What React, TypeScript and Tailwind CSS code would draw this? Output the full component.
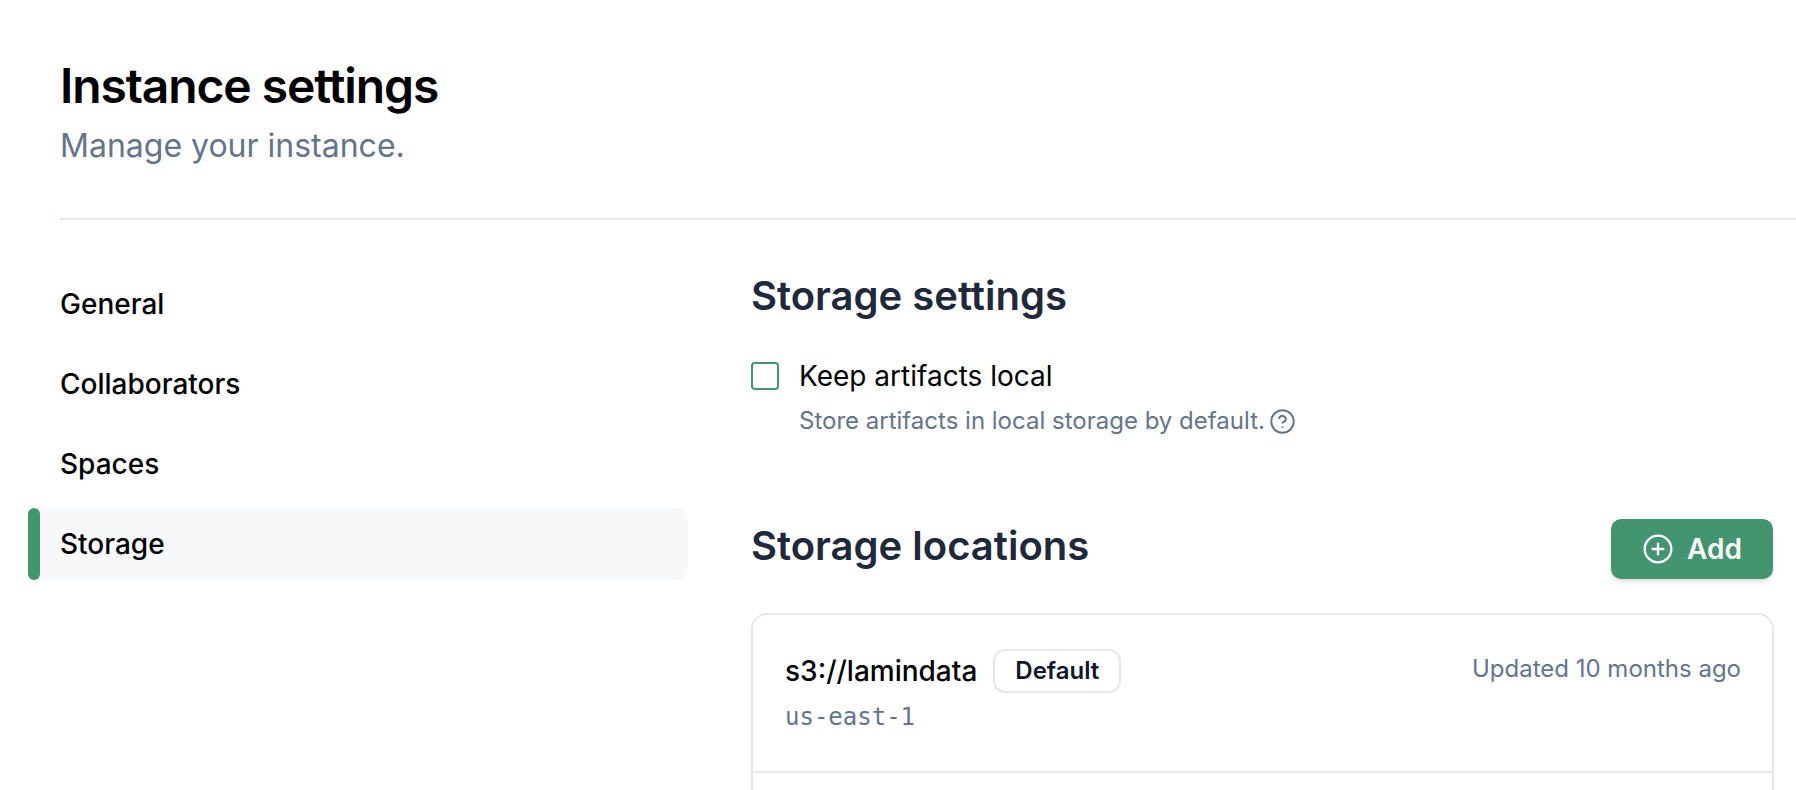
import { CircleHelp, CirclePlus } from 'lucide-react';

const navItems = ['General', 'Collaborators', 'Spaces', 'Storage'];

function SideNav({ active }: { active: string }) {
  return (
    <nav className="flex w-[660px] shrink-0 flex-col gap-2">
      {navItems.map(item => (
        <a
          key={item}
          className={`flex h-[72px] items-stretch rounded-xl text-[28px] font-medium text-black ${
            item === active ? 'bg-[#f7f8fa]' : ''
          }`}
        >
          <span className={`w-3 rounded-full ${item === active ? 'bg-[#43956f]' : ''}`} />
          <span className="flex items-center pl-5">{item}</span>
        </a>
      ))}
    </nav>
  );
}

export default function App() {
  return (
    <div className="h-[790px] overflow-hidden bg-white font-['Inter',sans-serif]">
      <header className="ml-[60px] h-[220px] border-b-2 border-[#e2e8f0] pt-[55px]">
        <h1 className="text-[48px] leading-[62px] font-semibold tracking-[-0.023em] text-black">
          Instance settings
        </h1>
        <p className="mt-[9px] text-[32px] leading-[40px] text-[#64748b]">Manage your instance.</p>
      </header>

      <div className="flex pt-[48px] pl-7">
        <SideNav active="Storage" />

        <main className="ml-[63px] w-[1023px] shrink-0">
          <h2 className="-mt-[1px] text-[40px] leading-[58px] font-semibold text-[#1e293b]">
            Storage settings
          </h2>

          <div className="mt-[35px] flex gap-5">
            <div className="mt-[2px] h-7 w-7 rounded-[4px] border-2 border-[#43956f]" />
            <div>
              <div className="text-[28px] leading-8 text-black">Keep artifacts local</div>
              <div className="mt-[13px] flex items-center gap-1 text-[24px] leading-8 text-[#64748b]">
                Store artifacts in local storage by default.
                <CircleHelp size={27} strokeWidth={1.75} />
              </div>
            </div>
          </div>

          <div className="mt-[82px] flex items-start justify-between">
            <h2 className="-mt-[2px] text-[40px] leading-[58px] font-semibold text-[#1e293b]">
              Storage locations
            </h2>
            <button className="mr-px flex h-[60px] w-[162px] items-center justify-center gap-[13px] rounded-[10px] bg-[#43956f] text-[28px] font-semibold text-white shadow-md">
              <CirclePlus size={32} strokeWidth={1.75} />
              Add
            </button>
          </div>

          <div className="mt-[34px] h-[400px] rounded-2xl border-2 border-[#e5e7eb]">
            <div className="flex h-[158px] justify-between border-b-2 border-[#e5e7eb] pt-[34px] pr-[31px] pl-8">
              <div>
                <div className="flex items-center gap-4">
                  <span className="text-[28px] font-medium text-black">s3://lamindata</span>
                  <span className="flex h-11 w-[128px] items-center justify-center rounded-xl border-2 border-[#e5e7eb] text-[24px] font-semibold text-[#0f172a]">
                    Default
                  </span>
                </div>
                <div className="mt-[8px] font-['DejaVu_Sans_Mono',monospace] text-[24px] leading-8 text-[#64748b]">
                  us-east-1
                </div>
              </div>
              <span className="mt-[4px] text-[24px] leading-8 text-[#64748b]">
                Updated 10 months ago
              </span>
            </div>
          </div>
        </main>
      </div>
    </div>
  );
}
